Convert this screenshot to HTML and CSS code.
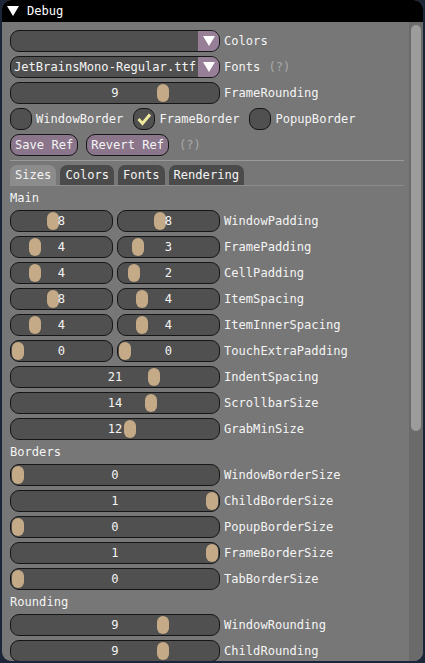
FILE: index.html
```html
<!DOCTYPE html>
<html>
<head>
<meta charset="utf-8">
<link rel="stylesheet" href="styles.css">
</head>
<body>
<div class="window">
  <div class="titlebar">
    <svg class="title-tri" width="12" height="10" viewBox="0 0 12 10"><polygon points="0,0 12,0 6,10" fill="#fff"/></svg>
    <span>Debug</span>
  </div>
  <div class="wbody">
    <div class="content">
      <div class="row">
        <div class="combo full"><span class="combo-text"></span><span class="combo-btn"><svg width="12" height="10" viewBox="0 0 12 10"><polygon points="0,0 12,0 6,10" fill="#fff"/></svg></span></div>
        <span class="label">Colors</span>
      </div>
      <div class="row">
        <div class="combo full"><span class="combo-text">JetBrainsMono-Regular.ttf</span><span class="combo-btn"><svg width="12" height="10" viewBox="0 0 12 10"><polygon points="0,0 12,0 6,10" fill="#fff"/></svg></span></div>
        <span class="label">Fonts</span><span class="help">(?)</span>
      </div>
      <div class="row">
        <div class="slider full"><span class="grab" style="left:146px"></span><span class="val">9</span></div>
        <span class="label">FrameRounding</span>
      </div>
      <div class="row checks">
        <div class="check"><span class="box"></span><span class="clabel">WindowBorder</span></div>
        <div class="check"><span class="box"><svg width="20" height="20" viewBox="0 0 20 20"><polyline points="4.5,10 8.5,14.5 16,5.5" fill="none" stroke="#ece89c" stroke-width="3"/></svg></span><span class="clabel">FrameBorder</span></div>
        <div class="check"><span class="box"></span><span class="clabel">PopupBorder</span></div>
      </div>
      <div class="row buttons">
        <span class="btn">Save Ref</span>
        <span class="btn">Revert Ref</span>
        <span class="help">(?)</span>
      </div>
      <div class="separator"></div>
      <div class="tabbar">
        <span class="tab active">Sizes</span>
        <span class="tab">Colors</span>
        <span class="tab">Fonts</span>
        <span class="tab">Rendering</span>
      </div>
      <div class="text">Main</div>
      <div class="row"><div class="pair"><div class="slider half"><span class="grab" style="left:36px"></span><span class="val">8</span></div><div class="slider half"><span class="grab" style="left:36px"></span><span class="val">8</span></div></div><span class="label">WindowPadding</span></div>
      <div class="row"><div class="pair"><div class="slider half"><span class="grab" style="left:18px"></span><span class="val">4</span></div><div class="slider half"><span class="grab" style="left:14px"></span><span class="val">3</span></div></div><span class="label">FramePadding</span></div>
      <div class="row"><div class="pair"><div class="slider half"><span class="grab" style="left:18px"></span><span class="val">4</span></div><div class="slider half"><span class="grab" style="left:10px"></span><span class="val">2</span></div></div><span class="label">CellPadding</span></div>
      <div class="row"><div class="pair"><div class="slider half"><span class="grab" style="left:36px"></span><span class="val">8</span></div><div class="slider half"><span class="grab" style="left:18px"></span><span class="val">4</span></div></div><span class="label">ItemSpacing</span></div>
      <div class="row"><div class="pair"><div class="slider half"><span class="grab" style="left:18px"></span><span class="val">4</span></div><div class="slider half"><span class="grab" style="left:18px"></span><span class="val">4</span></div></div><span class="label">ItemInnerSpacing</span></div>
      <div class="row"><div class="pair"><div class="slider half"><span class="grab" style="left:1px"></span><span class="val">0</span></div><div class="slider half"><span class="grab" style="left:1px"></span><span class="val">0</span></div></div><span class="label">TouchExtraPadding</span></div>
      <div class="row"><div class="slider full"><span class="grab" style="left:137px"></span><span class="val">21</span></div><span class="label">IndentSpacing</span></div>
      <div class="row"><div class="slider full"><span class="grab" style="left:134px"></span><span class="val">14</span></div><span class="label">ScrollbarSize</span></div>
      <div class="row"><div class="slider full"><span class="grab" style="left:113px"></span><span class="val">12</span></div><span class="label">GrabMinSize</span></div>
      <div class="text">Borders</div>
      <div class="row"><div class="slider full"><span class="grab" style="left:1px"></span><span class="val">0</span></div><span class="label">WindowBorderSize</span></div>
      <div class="row"><div class="slider full"><span class="grab" style="left:195px"></span><span class="val">1</span></div><span class="label">ChildBorderSize</span></div>
      <div class="row"><div class="slider full"><span class="grab" style="left:1px"></span><span class="val">0</span></div><span class="label">PopupBorderSize</span></div>
      <div class="row"><div class="slider full"><span class="grab" style="left:195px"></span><span class="val">1</span></div><span class="label">FrameBorderSize</span></div>
      <div class="row"><div class="slider full"><span class="grab" style="left:1px"></span><span class="val">0</span></div><span class="label">TabBorderSize</span></div>
      <div class="text">Rounding</div>
      <div class="row"><div class="slider full"><span class="grab" style="left:146px"></span><span class="val">9</span></div><span class="label">WindowRounding</span></div>
      <div class="row"><div class="slider full"><span class="grab" style="left:146px"></span><span class="val">9</span></div><span class="label">ChildRounding</span></div>
    </div>
    <div class="scrollbar"><div class="sgrab"></div></div>
  </div>
</div>
</body>
</html>
```
FILE: styles.css
```css
* { box-sizing: border-box; }
body {
  margin: 0;
  background: #1d2638;
  font-family: "DejaVu Sans Mono", "Liberation Mono", monospace;
  font-size: 12.1px;
  color: #f4f4f4;
}
.window {
  margin-left: 2px;
  width: 421px;
  height: 661px;
  background: #777777;
  border-radius: 9px;
  overflow: hidden;
  display: flex;
  flex-direction: column;
}
.titlebar {
  height: 22px;
  flex: none;
  background: #000;
  display: flex;
  align-items: center;
  padding-left: 5px;
  gap: 8px;
  color: #fff;
}
.wbody {
  flex: 1;
  min-height: 0;
  display: flex;
}
.content {
  flex: 1;
  min-width: 0;
  padding: 8px 0 0 8px;
  display: flex;
  flex-direction: column;
  gap: 4px;
  overflow: hidden;
}
.row {
  height: 22px;
  flex: none;
  display: flex;
  align-items: center;
}
.label { margin-left: 4px; white-space: nowrap; }
.help { margin-left: 8px; color: #a9a9a9; }
.full { width: 210px; }
.half { width: 103px; }
.pair { display: flex; gap: 4px; }
.combo, .slider {
  height: 22px;
  flex: none;
  background: #505050;
  border: 1px solid #161616;
  border-radius: 9px;
  position: relative;
  display: flex;
  align-items: center;
}
.combo { overflow: hidden; }
.combo-text { flex: 1; padding-left: 3px; white-space: nowrap; }
.combo-btn {
  width: 21px;
  height: 20px;
  background: #977f98;
  display: flex;
  align-items: center;
  justify-content: center;
}
.slider { justify-content: center; }
.val { position: relative; z-index: 1; }
.grab {
  position: absolute;
  top: 1px;
  width: 12px;
  height: 18px;
  border-radius: 6px;
  background: #c4aa87;
}
.checks { gap: 10px; }
.check { display: flex; align-items: center; gap: 4px; }
.box {
  width: 22px;
  height: 22px;
  background: #505050;
  border: 1px solid #161616;
  border-radius: 9px;
  display: flex;
  align-items: center;
  justify-content: center;
}
.buttons { gap: 8px; }
.buttons .help { margin-left: 0; padding-left: 2px; }
.btn {
  height: 22px;
  padding: 0 4px;
  display: flex;
  align-items: center;
  background: #8a758b;
  border: 1px solid #161616;
  border-radius: 9px;
}
.separator {
  height: 1px;
  flex: none;
  width: 394px;
  background: #9a9a9a;
}
.tabbar {
  flex: none;
  width: 394px;
  height: 21px;
  display: flex;
  gap: 4px;
  align-items: flex-start;
  border-bottom: 1px solid #8c8c8c;
}
.tab {
  height: 20px;
  padding: 0 5px;
  display: flex;
  align-items: center;
  background: #4b4b4b;
  border-radius: 7px 7px 0 0;
}
.tab.active { background: #8c8c8c; }
.text {
  height: 16px;
  flex: none;
  display: flex;
  align-items: center;
}
.scrollbar {
  width: 14px;
  flex: none;
  background: #6b6b6b;
  padding: 3px 2px;
}
.sgrab {
  height: 406px;
  background: #9c9c9c;
  border-radius: 5px;
}
```
